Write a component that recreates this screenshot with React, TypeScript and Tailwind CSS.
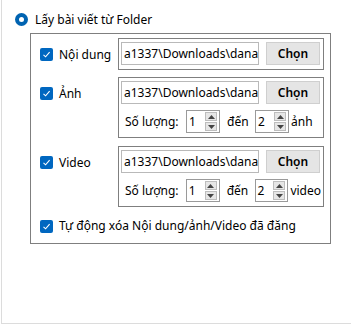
import React from "react";

const font = { fontFamily: '"Noto Sans", "Open Sans", Arial, sans-serif' };

function Check() {
  return (
    <span className="flex h-[13px] w-[13px] shrink-0 items-center justify-center rounded-[2px] bg-[#0067c0]">
      <svg width="9" height="9" viewBox="0 0 9 9" fill="none">
        <path d="M1.5 4.8 L3.6 6.8 L7.6 2.2" stroke="white" strokeWidth="1.1" />
      </svg>
    </span>
  );
}

function PathInput({ caret = false }: { caret?: boolean }) {
  return (
    <div className="flex h-[23px] w-[138px] items-center overflow-hidden border border-[#b9b9b9] bg-white pl-[2px] text-[12px] whitespace-nowrap text-black">
      <span>a1337\Downloads\dana</span>
      {caret && <span className="h-[15px] w-[1px] bg-black" />}
    </div>
  );
}

function ChooseButton() {
  return (
    <div className="flex h-[23px] w-[54px] items-center justify-center border border-[#cfcfcf] bg-[#e5e5e5] text-[12px] font-semibold text-black">
      Chọn
    </div>
  );
}

function Spin({ value }: { value: number }) {
  return (
    <div className="flex h-[23px] w-[34px] items-center justify-between border border-[#9a9a9a] bg-white pr-[2px] pl-[2px]">
      <span className="text-[12px] text-black">{value}</span>
      <div className="flex h-[19px] w-[12px] flex-col gap-[1px]">
        <div className="flex flex-1 items-center justify-center border border-[#bdbdbd] bg-[#e6e6e6]">
          <svg width="7" height="4" viewBox="0 0 7 4">
            <path d="M0 4 L3.5 0 L7 4 Z" fill="#444" />
          </svg>
        </div>
        <div className="flex flex-1 items-center justify-center border border-[#bdbdbd] bg-[#e6e6e6]">
          <svg width="7" height="4" viewBox="0 0 7 4">
            <path d="M0 0 L3.5 4 L7 0 Z" fill="#444" />
          </svg>
        </div>
      </div>
    </div>
  );
}

function CountRow({ unit }: { unit: string }) {
  return (
    <div className="mt-[6px] flex h-[23px] items-center pl-[4px] text-[12px] text-black">
      <span className="w-[61px] whitespace-nowrap">Số lượng:</span>
      <Spin value={1} />
      <span className="w-[35px] pl-[7px] whitespace-nowrap">đến</span>
      <Spin value={2} />
      <span className="ml-[2px] whitespace-nowrap">{unit}</span>
    </div>
  );
}

function Row({
  label,
  children,
  className = "",
}: {
  label: string;
  children: React.ReactNode;
  className?: string;
}) {
  return (
    <div className={`flex ${className}`}>
      <div className="flex h-[31px] w-[87px] items-center gap-[6px] pl-[9px] pt-[2px] text-[12px] text-black">
        <Check />
        <span className="whitespace-nowrap">{label}</span>
      </div>
      <div className="w-[206px] border border-[#7f7f7f] px-[2px] pt-[3px] pb-[4px]">
        {children}
      </div>
    </div>
  );
}

function PathLine({ caret = false }: { caret?: boolean }) {
  return (
    <div className="flex items-center gap-[7px]">
      <PathInput caret={caret} />
      <ChooseButton />
    </div>
  );
}

export default function App() {
  return (
    <div className="h-[326px] w-[351px] bg-white" style={font}>
      <div className="ml-[1px] h-[324px] border-b border-l border-[#dcdcdc] pt-[13px]">
        <div className="flex h-[13px] items-center gap-[7px] pl-[13px] text-[12px] text-black">
          <span className="flex h-[13px] w-[13px] items-center justify-center rounded-full bg-[#0063b1]">
            <span className="h-[5px] w-[5px] rounded-full bg-white" />
          </span>
          <span className="whitespace-nowrap">Lấy bài viết từ Folder</span>
        </div>

        <div className="mt-[7px] ml-[28px] w-[301px] border border-[#7f7f7f] pt-[4px] pb-[8px]">
          <Row label="Nội dung">
            <PathLine />
          </Row>
          <Row label="Ảnh" className="mt-[7px]">
            <PathLine />
            <CountRow unit="ảnh" />
          </Row>
          <Row label="Video" className="mt-[8px]">
            <PathLine caret />
            <CountRow unit="video" />
          </Row>
          <div className="mt-[10px] flex items-center gap-[6px] pl-[9px] text-[12px] text-black">
            <Check />
            <span className="whitespace-nowrap">Tự động xóa Nội dung/ảnh/Video đã đăng</span>
          </div>
        </div>
      </div>
    </div>
  );
}
